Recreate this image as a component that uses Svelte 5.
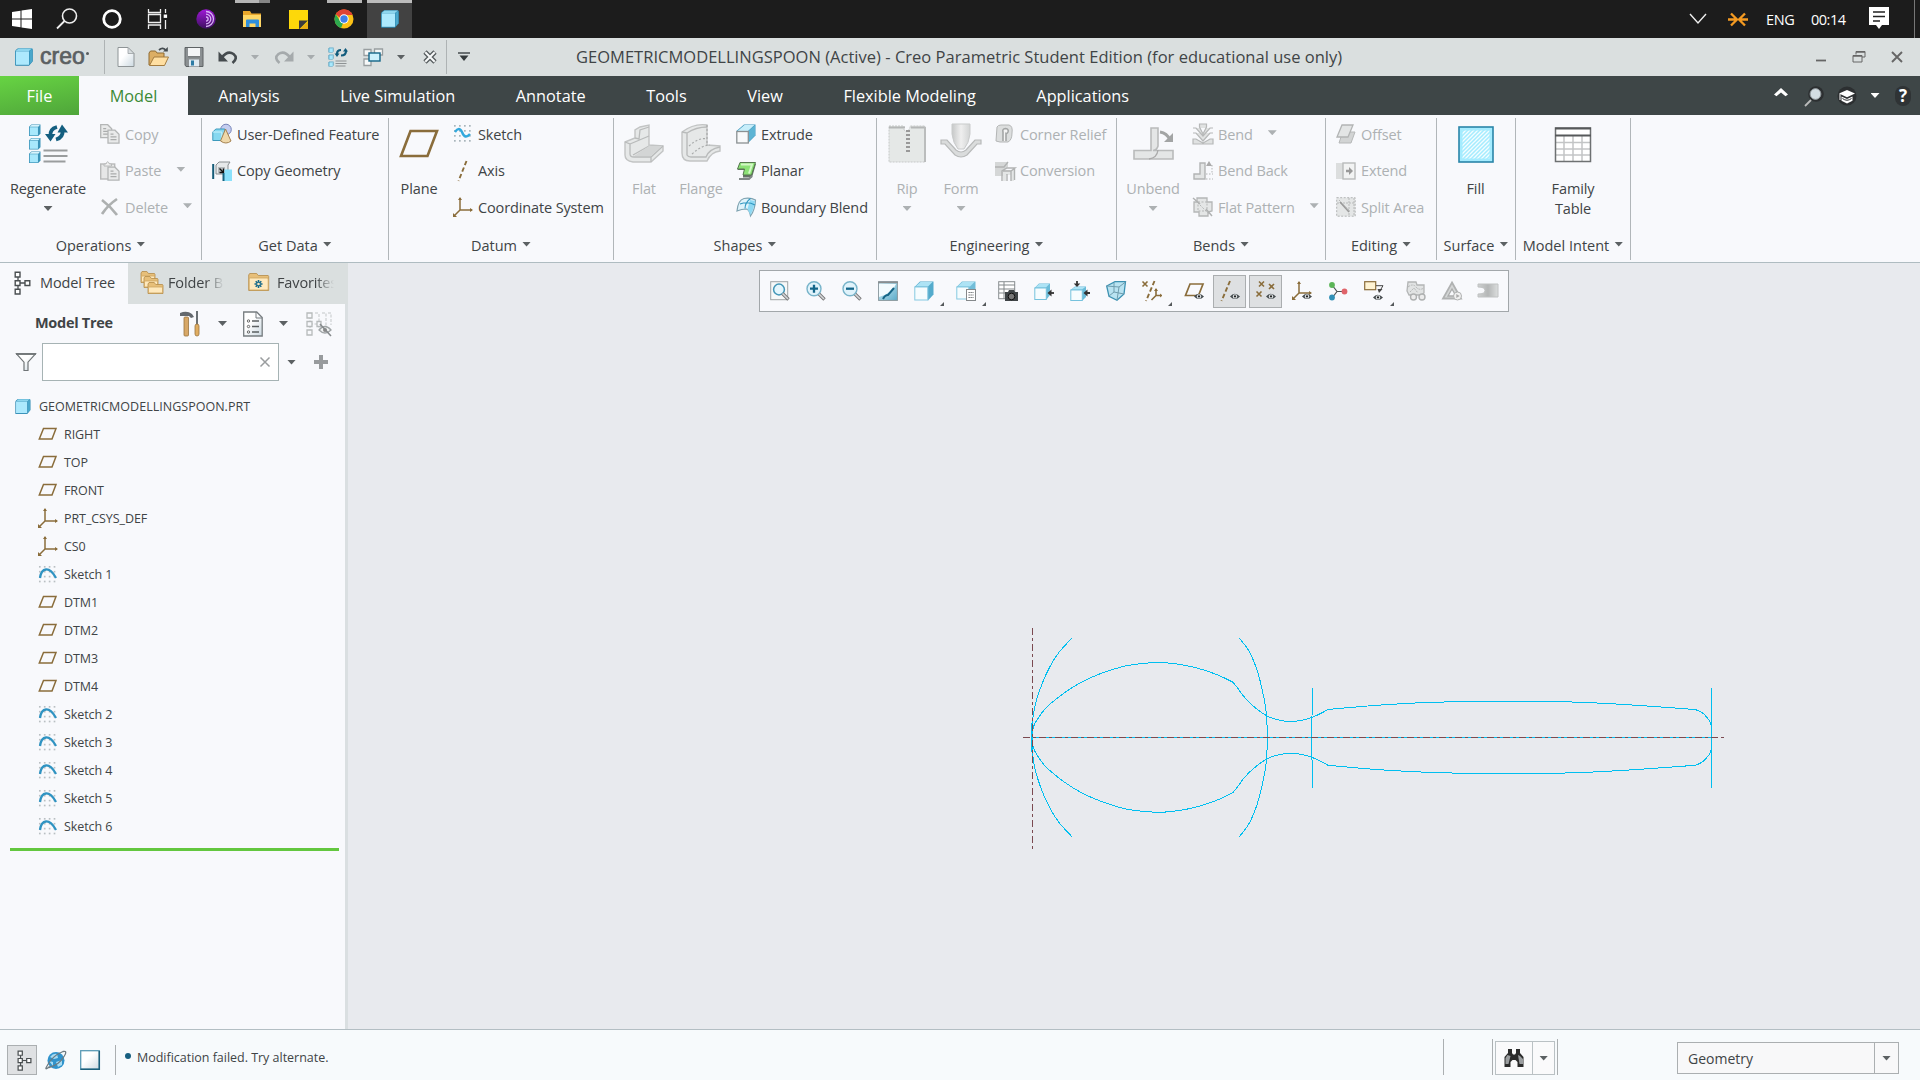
<script>
  const brown = '#8a6d3b';
  const eye = '<path d="M10 15.5q4.5-5.5 10 0q-5 5-10 0z" fill="#454b4e"/><circle cx="15" cy="15.4" r="2.2" fill="#dfe3e5"/><circle cx="15" cy="15.4" r="1.1" fill="#222"/>';
  const lens = '<path d="M12.5 12.5l6 6" stroke="#777" stroke-width="3.4"/><path d="M12.5 12.5l5.5 5.5" stroke="#d5d8da" stroke-width="1.6"/>';
  const box = (x, y, s, c = '#a8e8fc') =>
    `<path d="M${x} ${y + s * 0.2}l${s * 0.2}-${s * 0.2}h${s * 0.8}v${s * 0.8}l-${s * 0.2} ${s * 0.2}h-${s * 0.8}z" fill="#3a93b8"/><path d="M${x + 0.6} ${y + s * 0.2}l${s * 0.17}-${s * 0.15}h${s * 0.72}l-${s * 0.14} ${s * 0.15}z" fill="#d6f4fd"/><path d="M${x + 0.8} ${y + s * 0.24}h${s * 0.71}v${s * 0.7}h-${s * 0.71}z" fill="${c}"/>`;
  const dots = (c) => {
    let s = '';
    for (const y of [1, 6, 11, 16]) for (const x of [1, 6, 11, 16]) s += `<rect x="${x}" y="${y}" width="1.7" height="1.7" fill="${c}"/>`;
    return s;
  };
  const xmark = (x, y) => `<path d="M${x} ${y}l5 5m0-5l-5 5" stroke="${brown}" stroke-width="1.6" fill="none"/>`;
  const sheet = (x, y) => `<path d="M${x} ${y}h7l4 4v9h-11z" fill="#e9eaea" stroke="#b4b6b6" stroke-width="1.3"/><path d="M${x + 2.5} ${y + 4}h3m-3 2.7h6m-6 2.7h6" stroke="#aaacac" stroke-width="1.2"/>`;
  const folder = (x, y, w, h) => `<path d="M${x} ${y}l1-1.5h${w * 0.35}l1.5 2h${w * 0.65 - 3}l.5 1v${h - 2}h-${w}z" fill="#e7bf79" stroke="#b48c49" stroke-width=".8"/><rect x="${x + 0.5}" y="${y + 3}" width="${w - 1}" height="${h - 4}" rx="1" fill="#ffe9bd" stroke="#cda55f" stroke-width=".8"/>`;

  // Every drawing lives in its own square or rectangular view box, [width, height, markup].
  const icons = {
    win: [20, 20, '<path d="M0 3l8.5-1.3v7.8H0zM9.5 1.5L20 0v9.5H9.5zM0 10.5h8.5v7.8L0 17zM9.5 10.5H20V20L9.5 18.5z" fill="#fff"/>'],
    search: [22, 22, '<circle cx="13.5" cy="8" r="7" fill="none" stroke="#eee" stroke-width="1.6"/><path d="M8.5 13L1 20.5" stroke="#eee" stroke-width="1.8"/>'],
    ring: [20, 20, '<circle cx="10" cy="10" r="8.3" fill="none" stroke="#fff" stroke-width="2.8"/>'],
    taskview: [22, 20, '<path d="M1.5 0v3.5h12V0M1.5 20v-4h12v4M1.5 5.5h12v8h-12zM18.5 0v4M18.5 11v9" fill="none" stroke="#eee" stroke-width="1.3"/><rect x="16.7" y="5.5" width="3.4" height="3.4" fill="#fff"/>'],
    tor: [20, 20, '<circle cx="10" cy="10" r="9.7" fill="url(#torFill)"/><path d="M10 2.5a7.500 7.500 0 010 15M10 5.2a4.800 4.800 0 010 9.600M10 8a2 2 0 010 4.200" stroke="#d6b3f4" stroke-width="1.3" fill="none"/>'],
    explorer: [19, 17, '<path d="M0 0h7l1.500 2.500H18V16H0z" fill="#e9a72c"/><path d="M0 4h18v12H0z" fill="#ffd766"/><path d="M3 16V9.500q0-1 1-1h11q1 0 1 1V16h-3.500v-3.500h-6V16z" fill="#2f8fdc"/>'],
    note: [19, 19, '<path d="M0 0h19v13l-5.500 6H0z" fill="#fdd80a"/><path d="M10 10.500h9l-8.500 8.500H10z" fill="#3c3a3c"/><path d="M19 12v7h-8.500z" fill="#e9ad12"/>'],
    chrome: [20, 20, '<circle cx="10" cy="10" r="9.5" fill="#fbc116"/><path d="M10 10L1.800 5.200A9.500 9.500 0 0118.600 6H10z" fill="#e33b2e"/><path d="M1.800 5.200l4.600 7.200 3 .7-2.300 6A9.500 9.500 0 011.800 5.200z" fill="#2da94f"/><path d="M10 .5a9.500 9.500 0 018.500 5.300H10L6 9 1.900 5.100A9.500 9.500 0 0110 .5z" fill="#df4434"/><circle cx="10" cy="10" r="4.7" fill="#fff"/><circle cx="10" cy="10" r="3.7" fill="#3f7fe8"/>'],
    cube: [20, 20, '<path d="M1 4.500Q1 3 4 1.200h13.500q1.500 0 1.300 2v11L15 18.800H2q-1 0-1-1z" fill="#2b87b0"/><path d="M1.600 4L4.500 1.600h13.500L15 4z" fill="#8ed6ee"/><path d="M1.800 4.300H15v13.500H1.800z" fill="#ade9fd"/><path d="M15.500 4l2.800-2.200v12.500l-2.800 3.200z" fill="#4aa7cb"/>'],
    chevron: [16, 10, '<path d="M0 0l8 9 8-9" fill="none" stroke="#eee" stroke-width="1.4"/>'],
    orange: [20, 14, '<path d="M0 7.500h7.500M12.500 7.500H20M3 1.500l6 6-6 6M17 1.500l-6 6 6 6" fill="none" stroke="#f49a22" stroke-width="2.3"/>'],
    notif: [20, 24, '<path d="M0 0h20v18h-7l-3 4-3-4H0z" fill="#fff"/><path d="M4 5h12M4 9.500h12M4 14h7" stroke="#222" stroke-width="1.4"/>'],
    newdoc: [18, 20, '<path d="M1 .5h10l6 6v13H1z" fill="url(#paper)" stroke="#8e9496"/><path d="M11 .5v6h6z" fill="#d8dddf" stroke="#9aa0a2" stroke-width=".8"/>'],
    open: [22, 20, '<path d="M1 18V6l1.500-2h5l1.500 2h7v4z" fill="#dcae64" stroke="#8f6b32"/><path d="M1.500 18.500L6 10h14.500l-4 8.500z" fill="#ffdfa2" stroke="#a47c3f"/><path d="M11 3q4-3.500 7 .5" fill="none" stroke="#444b4f" stroke-width="1.8"/><path d="M15 4.500h4.800V0z" fill="#444b4f"/>'],
    save: [20, 20, '<path d="M1 .5h18v19H2L1 18z" fill="#8b9092" stroke="#5e6365"/><rect x="4" y="1" width="12" height="9" fill="#f3f5f6"/><path d="M4 9.700h12" stroke="#5c6062"/><rect x="5" y="12.5" width="10" height="7" fill="#dfeaf1"/><rect x="7" y="13.5" width="3" height="5" fill="#2d7ca5"/>'],
    undo: [20, 16, '<path d="M3.500 9q6-8 12-4 5 4-1 9" fill="none" stroke="#454b4e" stroke-width="2.6"/><path d="M.5 2.500v10h9.500z" fill="#454b4e"/>'],
    redo: [20, 16, '<path d="M16.500 9q-6-8-12-4-5 4 1 9" fill="none" stroke="#a5aaac" stroke-width="2.6"/><path d="M19.500 2.500v10H10z" fill="#a5aaac"/>'],
    regenS: [20, 20, box(0.5, 0.5, 5) + box(0.5, 7.5, 5) + box(0.5, 14.5, 5) + '<path d="M7.500 14h11M7.500 16.500h11M7.500 19h10" stroke="#8d9294" stroke-width="1.2"/><path d="M9 7q0-4 4-4M18 4q0 4.500-5 4.500" fill="none" stroke="#125c7d" stroke-width="2.2"/><path d="M6.500 6.500h5L9 10zM15 4.500h5L17.500 1z" fill="#125c7d"/>'],
    windows: [20, 20, '<path d="M1 2.500h7v6H1zM11.500 2h8v6h-8zM1 12h7v6.500H1z" fill="#f6f8f8" stroke="#989ea0" stroke-width="1.3"/><rect x="6" y="6" width="11" height="8" fill="#cdf1fd" stroke="#146688" stroke-width="1.4"/>'],
    closeX: [14, 14, '<path d="M2 2l10 10M12 2L2 12" stroke="#555b5d" stroke-width="4.6"/><path d="M2.300 2.300l9.400 9.400M11.700 2.300l-9.400 9.400" stroke="#f7f9f9" stroke-width="2.1"/>'],
    more: [12, 10, '<path d="M0 1h12" stroke="#444b4e" stroke-width="1.5"/><path d="M1.500 3.500h9L6 9z" fill="#343a3c"/>'],
    min: [12, 12, '<path d="M1 9.500h10" stroke="#666" stroke-width="1.8"/>'],
    restore: [14, 14, '<path d="M4 4.500V1.500h9V7h-3M1 5.500h9v6.500H1z" fill="none" stroke="#666"/><path d="M4 2h9M1 6h9" stroke="#666" stroke-width="1.7"/>'],
    close: [12, 12, '<path d="M1 1l10 10M11 1L1 11" stroke="#666" stroke-width="1.9"/>'],
    caretUp: [14, 9, '<path d="M7 0l7 6.500-2.500 1.800L7 4.500 2.500 8.300 0 6.500z" fill="#fff"/>'],
    glass: [20, 22, '<circle cx="12" cy="9" r="7.8" fill="#2c2f31"/><path d="M7 15l-6 6" stroke="#bbb" stroke-width="1.8"/><circle cx="11.5" cy="9" r="5.4" fill="#d3dde3" stroke="#8f979b"/>'],
    grad: [20, 20, '<circle cx="10" cy="10" r="9.5" fill="#2c2f31"/><path d="M2 7.500L10 4l8 3.500-8 3.800z" fill="#fff"/><path d="M4.500 10.500l5.500 2.600 5.500-2.600v4.200L10 17.500l-5.500-2.800z" fill="#fff"/><path d="M5.500 12.500q4.500 3.500 9 0" fill="none" stroke="#2c2f31"/><path d="M3 8v6" stroke="#fff"/>'],
    regen: [40, 40, box(1, 0.5, 11.5) + box(1, 14, 11.5) + box(1, 27.500, 11.500) + '<path d="M15.500 26.500h24M15.500 32h24M15.500 37.500h22" stroke="#9a9d9e" stroke-width="2"/><path d="M22.500 12q-1-7 6.500-9M34.500 5.500q1 8-6.500 10" fill="none" stroke="#145f80" stroke-width="3.8"/><path d="M17 10h10.500L22.500 17.500zM29.500 8.500H40L34 .5z" fill="#145f80"/>'],
    copy: [20, 20, sheet(0.7, 0.7) + sheet(8, 6.2)],
    paste: [20, 20, '<rect x=".7" y="3" width="14" height="15" fill="#e6e7e7" stroke="#b8baba" stroke-width="1.4"/><path d="M4 5V3h2Q7.500-1.500 9.500 3h2v2z" fill="#f1f1f1" stroke="#b8baba"/>' + sheet(8, 6.2)],
    del: [20, 20, '<path d="M2 3q8 6 15 15M17 2Q8 8 2 17" fill="none" stroke="#adb0b0" stroke-width="2.7"/>'],
    udf: [20, 20, '<circle cx="14" cy="5.5" r="5.3" fill="#c4cdf0" stroke="#7784b9"/><path d="M.8 8l3-3h9v8l-3 3.500h-9z" fill="#86d8f0" stroke="#3d9abc"/><path d="M.8 8h9v8.500" fill="none" stroke="#c9f1fb"/><path d="M8.500 17L13.500 5 19 17q-5 4-10.500 0z" fill="#efd8aa" stroke="#a58250"/>'],
    copygeo: [20, 20, '<rect x=".2" y="3" width="2" height="15" fill="#165c78"/><path d="M4 4l3-3h11l-2 3v9H4z" fill="#e6e9ea" stroke="#888e90"/><path d="M6 6h7v7H6z" fill="#b5babc"/><path d="M7.500 7.500l4 4m0-4v4h-4" stroke="#111" stroke-width="1.300" fill="none"/><path d="M10.500 12H13v8h-2.500z" fill="#17627f"/><path d="M12.500 8.500H20V20h-7.500z" fill="#8be1fb"/>'],
    plane: [40, 40, `<path d="M11.500 7H38L28.500 32H2z" fill="none" stroke="${brown}" stroke-width="2.6"/>`],
    sketch: [20, 20, dots('#a9b5bb') + '<path d="M2 8q4-6 7 0 3 8 8 2" fill="none" stroke="#33a9dd" stroke-width="2.4"/>'],
    axis: [20, 20, `<path d="M13.500 0l-8 20" stroke="${brown}" stroke-width="1.9" stroke-dasharray="4.5 2.5"/>`],
    csys: [20, 20, `<path d="M7 1v12h12M7 13l-6 6" fill="none" stroke="${brown}" stroke-width="1.5"/><path d="M5 3h4L7 0zM17 11v4l3-2zM0 20v-4l4 4z" fill="${brown}"/>`],
    flat: [40, 40, '<path d="M1 18l10-4V6l5-3 9-2v20l14 1v5L27 38H9q-8-1-8-7z" fill="#e6e8e8" stroke="#c2c4c4" stroke-width="1.4"/><path d="M1 18l5 2v10q0 3 4 3h17l12-11M6 20l19-8M9 31l16-9M27 33v5M11 14l4 1 1-9 9-3" fill="none" stroke="#b9bbbb" stroke-width="1.3"/><path d="M10 32l15-10h13L27 32z" fill="#d3d5d5"/>'],
    flange: [40, 40, '<path d="M1 8Q13-1 26 1v20l13 1v5q-9 1-13 10H9q-8 0-8-8z" fill="#e6e8e8" stroke="#c2c4c4" stroke-width="1.4"/><path d="M6 9v22q1 2 4 2h15q3-8 14-10M1 8l5 1q9-6 20-6" fill="none" stroke="#b9bbbb" stroke-width="1.4"/><path d="M8 22q10-9 18-7M11 30q10-9 18-9M26 1v20" fill="none" stroke="#a9abab" stroke-dasharray="2 2" stroke-width="1.2"/>'],
    extrude: [20, 20, '<path d="M.5 7L8 .5h11.500v11L12 19z" fill="#3f97bd"/><path d="M1.500 7l7-6h10L12 7z" fill="#c7eefa"/><path d="M12.500 7L19 1.200v10L12.500 18z" fill="#5db4d4"/><rect x=".8" y="7.5" width="11.5" height="11.5" fill="#f8f9fa" stroke="#8b9193" stroke-width="1.3"/>'],
    planar: [20, 20, '<path d="M3.500 3H20l-4 13.500H7V13h2.500V9h-8z" fill="#67716a"/><path d="M4 1.500h15.500L15.500 14H7l1.500-6H1.500z" fill="#8ce276" stroke="#56794e"/><path d="M5 3.500h11l-3 9" fill="none" stroke="#d3f8c6" stroke-width="2"/><path d="M3 18h10l3-3" fill="none" stroke="#818887" stroke-width="2"/>'],
    blend: [20, 20, '<path d="M1 14Q2 3 8 1.500q7-1 11.500 1.500Q19 13 14.500 19q-1-6-4-7-5 0-9.500 2z" fill="#dff3fb" stroke="#7fa3b1" stroke-width="1.2"/><path d="M14 3l5 1q-1 8-4.500 14l-3-6z" fill="#8fd9f3"/><path d="M4 7q8-3 15 1M9 11.500q0-6 5.500-10" fill="none" stroke="#3097c1" stroke-width="1.100"/>'],
    rip: [40, 40, '<path d="M2 2h15v4l3 2 3-4V2h15v36H2z" fill="#e5e8e7" stroke="#c6c8c8" stroke-dasharray="2 1"/><path d="M2 3.500h16M24 3.500h14" stroke="#b5b7b7" stroke-width="2"/><path d="M38 3v35" stroke="#bbbdbd" stroke-width="2"/><path d="M21 6v22" stroke="#999" stroke-width="4" stroke-dasharray="2 2"/>'],
    form: [40, 40, '<path d="M11 0h18v10q-1 9-6 15h-6q-5-6-6-15z" fill="url(#grey)" stroke="#c9cbcb"/><path d="M0 16h6l9 10q5 4 10 0l9-10h6v4h-4L26 31q-6 4-12 0L4 20H0z" fill="#dadcdc" stroke="#b8baba" stroke-width="1.2"/>'],
    corner: [20, 20, '<path d="M2 3q1-2 4-2h8q4 1 3 8 0 7-4 9H5l-4-1z" fill="#dcdede" stroke="#b4b6b6"/><path d="M8 17V8q-1-3 2.500-3.500Q14 5 13 8q-1 2-2 1.500V17" fill="#f4f4f4" stroke="#a3a5a5" stroke-width="1.6"/>'],
    conv: [20, 20, '<path d="M0 1h13v5l-5 4v5H0z" fill="#d5d7d7"/><path d="M8 9h11v11h-3v-6h-5v6H8z" fill="#e4e6e6"/><path d="M0 6h9l4-5M8 10h8l4-3h-8l-5 3v10M12 13v7M16 10v10M19.500 8v11" fill="none" stroke="#b1b3b3" stroke-width="1.4"/>'],
    unbend: [40, 40, '<path d="M1 26.500h17V4h7v18q-1 4-5 4.500h20V35H1z" fill="#e4e6e6" stroke="#b9bbbb" stroke-width="1.6"/><path d="M16 35q8-1 9-9" fill="none" stroke="#aaa" stroke-width="1.3"/><path d="M27 8q7 1 10 8" fill="none" stroke="#a3a5a5" stroke-width="3"/><path d="M31 18h9V9z" fill="#a3a5a5"/>'],
    bend: [20, 20, '<path d="M6.500 0h7v3L10 10 6.500 3zM0 4h3l7 8 7-8h3M0 9h3l7 8 7-8h3M0 20h20v-5h-3l-7 4-7-4H0z" fill="#e0e2e2" stroke="#b6b8b8" stroke-width="1.2"/>'],
    bendback: [20, 20, '<path d="M1 13h6V2h5v16H1z" fill="#e3e5e5" stroke="#b2b4b4" stroke-width="1.4"/><path d="M13 13h7M13 18h7M19 4v9" stroke="#b2b4b4" stroke-dasharray="1.5 1.5"/><path d="M13 5l3-5 3 5z" fill="#aaa"/>'],
    flatp: [20, 20, '<path d="M4 1h10v4h5v9l-4 1v4H6v-4H1V5h3z" fill="#e4e6e6" stroke="#b4b6b6" stroke-width="1.3"/><path d="M2 3l14 14M5 5h9v9H5z" stroke="#b5b7b7" fill="none" stroke-dasharray="2 1.5"/><path d="M0 1l7 6M13 12l6 7" stroke="#b0b2b2" stroke-width="1.5"/>'],
    offset: [20, 20, '<path d="M5 13l3-5h11l-4 11H3z" fill="#d2d4d4" stroke="#b6b8b8"/><path d="M6 1h11l-5 12H1z" fill="#e3e5e5" stroke="#b2b4b4" stroke-width="1.3"/>'],
    extend: [20, 20, '<path d="M0 2h8v16H0z" fill="#dcdede"/><rect x="7" y="2" width="12" height="16" fill="#f2f3f3" stroke="#b9bbbb" stroke-width="1.4"/><path d="M10 8.800h3V6l4 4-4 4v-2.800h-3z" fill="#999"/>'],
    split: [20, 20, '<rect x=".7" y=".7" width="18.5" height="18.5" fill="#e4e6e6" stroke="#b3b5b5" stroke-dasharray="2 1.5"/><path d="M1 6h18M13 1v18M18 1v18M3 3l11 11" stroke="#b8baba" stroke-dasharray="2 1" fill="none"/><path d="M4 5l9 10" stroke="#999" stroke-width="1.5"/>'],
    fill: [40, 44, '<rect x="3" y="3" width="34" height="35" fill="#a5ecff" stroke="#2a85a8" stroke-width="1.6"/><rect x="6.5" y="6.5" width="27" height="28" fill="url(#hatch)"/>'],
    table: [40, 44, '<rect x="2.5" y="4" width="35" height="33.5" fill="#fff"/><path d="M11 12v25M20 12v25M29 12v25M3 18.500h35M3 25h35M3 31h35" stroke="#c3c5c6" stroke-width="1.5"/><path d="M2.500 4h35v33.500h-35z" fill="none" stroke="#6e7172" stroke-width="1.5"/><path d="M2 4.500h36M2 11.500h36" stroke="#56595a" stroke-width="2"/>'],
    refit: [20, 20, '<rect x=".7" y=".7" width="17" height="18" fill="#f7f8f8" stroke="#9fa4a6"/><circle cx="9" cy="8.5" r="5.4" fill="#e4f6fd" stroke="#4396b7" stroke-width="1.5"/>' + lens],
    zin: [20, 20, lens + '<circle cx="8" cy="7.7" r="7" fill="#e0f3fb" stroke="#78b4ca" stroke-width="1.4"/><path d="M4 7.700h8M8 3.700v8" stroke="#13668a" stroke-width="2.3"/>'],
    zout: [20, 20, lens + '<circle cx="8" cy="7.7" r="7" fill="#e0f3fb" stroke="#78b4ca" stroke-width="1.4"/><path d="M4 7.700h8" stroke="#13668a" stroke-width="2.3"/>'],
    repaint: [20, 20, '<rect x=".6" y=".6" width="18.8" height="18.8" fill="url(#sky)" stroke="#8b989d"/><path d="M1 3h17Q15 12 1 16z" fill="#f2fbfe"/><path d="M0 1.500h20" stroke="#898e90" stroke-width="1.5"/><path d="M5 18q2-4 5-4L16 7" stroke="#156586" stroke-width="2" fill="none"/>'],
    shade: [20, 20, '<path d="M.5 6L6 .5h13.500v13L14 19.500z" fill="#54abcc"/><path d="M1.500 5.500L6.500 1h12L14 5.500z" fill="#ade3f5"/><rect x=".8" y="6" width="13" height="13" fill="#f6fcfe" stroke="#86c9e1"/>'],
    saved: [20, 20, '<path d="M.5 6L6 .5h13.500v11L14 17.500z" fill="#71bdd8"/><path d="M1.500 5.500L6.500 1h12L14 5.500z" fill="#ade3f5"/><rect x=".8" y="6" width="12" height="12" fill="#f6fcfe" stroke="#86c9e1"/><rect x="10.5" y="8.5" width="9" height="11" fill="#fff" stroke="#85898b"/><path d="M12.500 11.500h5m-5 2.500h5m-5 2.500h5" stroke="#656a6c" stroke-width="1.2" stroke-dasharray="1.3 .7"/>'],
    camera: [20, 20, '<rect x=".7" y=".7" width="16" height="17" fill="#fff" stroke="#888d8f"/><path d="M1 4h16M1 8h16M1 12h16M6 1v17" stroke="#83888a"/><path d="M7 11h3l1-2h5l1 2h3v9H7z" fill="#3f4446"/><circle cx="13.5" cy="15.5" r="3.3" fill="#777" stroke="#111"/>'],
    view1: [20, 20, '<path d="M.5 7L5 2.500h11V14l-3.500 4.500z" fill="#6bbcd9"/><path d="M1.500 6.500L5.200 3h10L12 6.500z" fill="#ade3f5"/><rect x=".8" y="7" width="11.5" height="11.5" fill="#f6fcfe" stroke="#76c2dd"/><path d="M15 12h5" stroke="#333" stroke-width="1.8"/><path d="M13.500 12l4-3.500v7z" fill="#333"/>'],
    view2: [20, 20, '<path d="M.5 9L5 5.500h11V16l-3.500 3.500z" fill="#6bbcd9"/><path d="M1.500 8.500L5.200 6h10L12 8.500z" fill="#ade3f5"/><rect x=".8" y="9" width="11.5" height="10.5" fill="#f6fcfe" stroke="#76c2dd"/><path d="M15 12h5M7 0v3" stroke="#333" stroke-width="1.8"/><path d="M13.500 12l4-3.500v7zM7 6L3.700 2.500h6.600z" fill="#333"/>'],
    persp: [20, 20, '<path d="M.7 5L9 .7h10.500L18 13l-7 6.300-8-4z" fill="#b9e3f1" stroke="#3d92b2" stroke-width="1.3"/><path d="M.7 5L13 6l6.500-5M13 6l-2 13M8 2v9l-5 4m5-4l10 2" fill="none" stroke="#6f9dae"/>'],
    datums: [20, 20, xmark(0.5, 0.5) + `<path d="M12.500 0L4 20" stroke="${brown}" stroke-width="1.9" stroke-dasharray="4.5 2.5"/><path d="M14 8v6.500h6M14 14.500L9.500 19" fill="none" stroke="${brown}" stroke-width="1.6"/><path d="M12 10h4l-2-3zM18 12.500v4l2-2z" fill="${brown}"/>`],
    pPlane: [20, 20, `<path d="M6 3h13l-4.500 11.500H1.500z" fill="none" stroke="${brown}" stroke-width="1.7"/>` + eye],
    pAxis: [20, 20, `<path d="M10 0L1.500 20" stroke="${brown}" stroke-width="1.9" stroke-dasharray="4.5 2.5"/>` + eye],
    pPoint: [20, 20, xmark(3, 0.5) + xmark(13, 3) + xmark(0.5, 10.5) + eye],
    pCsys: [20, 20, `<path d="M7 1v11h12M7 12l-6 6" fill="none" stroke="${brown}" stroke-width="1.5"/><path d="M5 3h4L7 0zM17 10v4l3-2zM0 19v-4l4 4z" fill="${brown}"/>` + eye],
    spin: [20, 20, '<path d="M4 4l5 6.500L4 17M9 10.500h8" fill="none" stroke="#4c5254" stroke-width="1.2"/><circle cx="4" cy="4" r="2.9" fill="#5cb558"/><circle cx="4" cy="16.5" r="2.9" fill="#3190b7"/><circle cx="16.5" cy="10.5" r="2.9" fill="#e0646a"/>'],
    annot: [20, 20, `<rect x=".7" y=".7" width="11" height="8" fill="#fff4d4" stroke="${brown}" stroke-width="1.2"/><path d="M12 4.700h7l-3 5" fill="none" stroke="#444"/><path d="M13.500 8h5L15 12z" fill="#444"/>` + '<g transform="translate(-1 1)">' + eye + '</g>'],
    sim1: [20, 20, '<path d="M2 1h8l1 3h7v8l-3 2H3L1 10z" fill="#e1e3e3" stroke="#b3b5b5" stroke-width="1.3"/><path d="M2 6q5-4 8 0t8 1M4 11l4-4 4 5" fill="none" stroke="#b5b7b7" stroke-dasharray="2 1"/><circle cx="7.5" cy="16" r="3" fill="#ececec" stroke="#afb1b1" stroke-width="1.4"/><circle cx="16" cy="16" r="3" fill="#ececec" stroke="#afb1b1" stroke-width="1.4"/>'],
    sim2: [20, 20, '<path d="M10 1.500L19 17.500H1z" fill="#d4d6d6" stroke="#b0b2b2" stroke-width="1.8"/><path d="M10 8l4 7H6z" fill="#f8f9fc" stroke="#aaacac" stroke-width="1.3"/><circle cx="15.5" cy="15" r="4" fill="#f0f0f0" stroke="#b0b2b2"/><path d="M14.300 13v4l3.400-2z" fill="#aaa"/>'],
    sim3: [20, 20, '<path d="M0 3h20v13H0V13q7 0 7-3.500T0 6z" fill="url(#grey2)" stroke="#c0c2c2"/>'],
    tree: [18, 24, '<path d="M4 5v14M4 12h7" stroke="#4a4f51" stroke-width="1.3"/><path d="M1.200 1.200h4.800v4.800H1.200zM1.200 9.700h4.800v4.800H1.200zM1.200 18.200h4.800V23H1.200zM11 9.700h4.800v4.800H11z" fill="#fff" stroke="#4a4f51" stroke-width="1.4"/>'],
    folders: [24, 24, folder(1, 2, 14, 10) + folder(4, 7, 14, 10) + folder(8, 13, 15, 10)],
    fav: [22, 20, folder(0.7, 2, 20, 16) + '<path d="M10.500 7v8M6.500 11h8M7.700 8.200l5.600 5.600M13.300 8.200l-5.600 5.600" stroke="#156889" stroke-width="1.6"/><circle cx="10.5" cy="11" r="1.3" fill="#ffe9bd"/>'],
    tools: [22, 26, '<path d="M1 2q7-3 12 1l2 3-3 1-2-2H1z" fill="#64696e"/><rect x="5" y="6" width="4.5" height="19" rx="1" fill="#d8a867" stroke="#9b7540" stroke-width=".8"/><path d="M18 0v14" stroke="#6a7074" stroke-width="2"/><rect x="16" y="13" width="4" height="12" rx="2" fill="#e0ad61" stroke="#9b7540" stroke-width=".8"/>'],
    list: [20, 26, '<path d="M.7 1h13l5.500 5.500V25H.7z" fill="url(#paper)" stroke="#777d80" stroke-width="1.3"/><path d="M13 1v6h6" fill="none" stroke="#777d80"/><path d="M9 10h7M9 15.500h7M9 21h7" stroke="#5b6062" stroke-width="1.4"/><circle cx="5.5" cy="10" r="1.2" fill="none" stroke="#666"/><circle cx="5.5" cy="15.5" r="1.2" fill="none" stroke="#666"/><circle cx="5.5" cy="21" r="1.2" fill="none" stroke="#666"/>'],
    hide: [26, 26, '<path d="M4 5v16M4 13h9M9 2h4M16 2h4v14M22 2h3v12M13 3v14" stroke="#c3c7c8" fill="none" stroke-dasharray="3 1.5"/><path d="M1 2h5v5H1zM1 10.500h5v5H1zM1 19h5v5H1zM11 10.500h4v5h-4z" fill="#f8f9fc" stroke="#b6babb" stroke-width="1.3"/><path d="M13 19q6-7 12 0-6 6-12 0z" fill="#f0f2f2" stroke="#9fa4a6" stroke-width="1.3"/><circle cx="19" cy="19" r="2" fill="#888"/><path d="M14 13l11 12" stroke="#85898b" stroke-width="1.5"/>'],
    funnel: [20, 18, '<path d="M.5.8h19l-7.500 8.400v8.300H8V9.200z" fill="url(#paper)" stroke="#707577" stroke-width="1.2"/><path d="M0 1h20" stroke="#707577" stroke-width="1.8"/>'],
    clear: [10, 10, '<path d="M.5.5l9 9M9.500.5l-9 9" stroke="#9a9d9f" stroke-width="1.5"/>'],
    plus: [14, 14, '<path d="M0 7h14M7 0v14" stroke="#989b9d" stroke-width="4"/>'],
    tPlane: [20, 16, `<path d="M5.500 2.500H18L14 13H1.300z" fill="none" stroke="${brown}" stroke-width="1.5"/>`],
    tSketch: [20, 18, '<g transform="scale(.98)">' + dots('#b9bfc2') + '</g><path d="M2 13q1-8 6-8.500Q13 4 18 13" fill="none" stroke="#2f93c2" stroke-width="2.3"/>'],
    globe: [20, 20, '<circle cx="10" cy="10.5" r="8.5" fill="#2f93cc"/><path d="M4 7q3-4 7-3l1 4-4 1zM10 12l6-2v5l-4 2zM3 11l4 1v4z" fill="#a4dbf4"/><path d="M3 17Q-2 21 1 16 6 6 17 1.500q5-1 1 5Q13 15 3 17.500z" fill="none" stroke="#6d7a80" stroke-width="1.3"/>'],
    screen: [20, 20, '<rect x=".7" y=".7" width="18.6" height="18.6" fill="url(#paper)" stroke="#5a9ab5" stroke-width="1.3"/><path d="M.5 19.300h18.800V1" fill="none" stroke="#1c5f7b" stroke-width="1.5"/>'],
    binoc: [20, 20, '<path d="M4 1h4v4l1 1.500h2L12 5V1h4v4l3.500 4v10h-6v-5l-2-2h-3l-2 2v5H.5V9L4 5z" fill="#2a2a2a"/><path d="M3.500 7L1.500 10v6h3l2-8zM14 7l2 1 3 3v5h-3.500z" fill="#9a9d9f"/>'],
  };

  const tabs = ['Analysis', 'Live Simulation', 'Annotate', 'Tools', 'View', 'Flexible Modeling', 'Applications'];

  const groups = [
    { name: 'Operations', width: 202, gap: 4, big: [{ label: 'Regenerate', icon: 'regen', w: 96, menu: true }],
      small: [{ label: 'Copy', icon: 'copy', off: true }, { label: 'Paste', icon: 'paste', off: true, menu: true }, { label: 'Delete', icon: 'del', off: true, menu: true }] },
    { name: 'Get Data', width: 187, gap: 10, big: [], small: [{ label: 'User-Defined Feature', icon: 'udf' }, { label: 'Copy Geometry', icon: 'copygeo' }] },
    { name: 'Datum', width: 225, gap: 4, big: [{ label: 'Plane', icon: 'plane', w: 60 }],
      small: [{ label: 'Sketch', icon: 'sketch' }, { label: 'Axis', icon: 'axis' }, { label: 'Coordinate System', icon: 'csys' }] },
    { name: 'Shapes', width: 263, gap: 8, big: [{ label: 'Flat', icon: 'flat', w: 60, off: true }, { label: 'Flange', icon: 'flange', w: 54, off: true }],
      small: [{ label: 'Extrude', icon: 'extrude' }, { label: 'Planar', icon: 'planar' }, { label: 'Boundary Blend', icon: 'blend' }] },
    { name: 'Engineering', width: 240, gap: 10, big: [{ label: 'Rip', icon: 'rip', w: 60, off: true, menu: true }, { label: 'Form', icon: 'form', w: 48, off: true, menu: true }],
      small: [{ label: 'Corner Relief', icon: 'corner', off: true }, { label: 'Conversion', icon: 'conv', off: true }] },
    { name: 'Bends', width: 209, gap: 4, big: [{ label: 'Unbend', icon: 'unbend', w: 72, off: true, menu: true }],
      small: [{ label: 'Bend', icon: 'bend', off: true, menu: true }, { label: 'Bend Back', icon: 'bendback', off: true }, { label: 'Flat Pattern', icon: 'flatp', off: true, menu: true }] },
    { name: 'Editing', width: 111, gap: 10, big: [], small: [{ label: 'Offset', icon: 'offset', off: true }, { label: 'Extend', icon: 'extend', off: true }, { label: 'Split Area', icon: 'split', off: true }] },
    { name: 'Surface', width: 79, gap: 0, big: [{ label: 'Fill', icon: 'fill', w: 77 }], small: [] },
    { name: 'Model Intent', width: 115, gap: 0, big: [{ label: 'Family Table', icon: 'table', w: 114 }], small: [] },
  ];

  const viewTools = [
    ['refit'], ['zin'], ['zout'], ['repaint'], ['shade', 'menu'], ['saved', 'menu'], ['camera'], ['view1'], ['view2'], ['persp'],
    ['datums', 'menu'], ['pPlane'], ['pAxis', 'on'], ['pPoint', 'on'], ['pCsys'], ['spin'], ['annot', 'menu'], ['sim1'], ['sim2'], ['sim3'],
  ];

  const tree = [
    ['tPlane', 'RIGHT'], ['tPlane', 'TOP'], ['tPlane', 'FRONT'], ['csys', 'PRT_CSYS_DEF'], ['csys', 'CS0'], ['tSketch', 'Sketch 1'],
    ['tPlane', 'DTM1'], ['tPlane', 'DTM2'], ['tPlane', 'DTM3'], ['tPlane', 'DTM4'],
    ['tSketch', 'Sketch 2'], ['tSketch', 'Sketch 3'], ['tSketch', 'Sketch 4'], ['tSketch', 'Sketch 5'], ['tSketch', 'Sketch 6'],
  ];

  // Smooth curve through the given points (Catmull-Rom converted to cubic Béziers).
  function smooth(p) {
    let d = `M${p[0][0]} ${p[0][1]}`;
    for (let i = 0; i < p.length - 1; i++) {
      const a = p[i - 1] ?? p[i], b = p[i], c = p[i + 1], e = p[i + 2] ?? c;
      d += `C${b[0] + (c[0] - a[0]) / 6} ${b[1] + (c[1] - a[1]) / 6} ${c[0] - (e[0] - b[0]) / 6} ${c[1] - (e[1] - b[1]) / 6} ${c[0]} ${c[1]}`;
    }
    return d;
  }
  const axisY = 737.4;
  const mirror = (p) => p.map(([x, y]) => [x, 2 * axisY - y]);
  const profile = [
    [[1032, 737], [1033.4, 727], [1037, 720], [1044.5, 709.5], [1056.7, 698.5], [1073.3, 686.8], [1090, 678], [1110, 670.3], [1130, 665.1], [1156.7, 662.5], [1177, 664], [1197, 668], [1216.7, 674.5], [1233, 682.3]],
    [[1233, 682.3], [1238, 688.5], [1243, 695.5], [1252, 705], [1267, 716], [1280, 720.3], [1291, 721.5], [1302, 720.3], [1311, 717.8], [1320, 713.8], [1328, 709.5]],
    [[1328, 709.5], [1358, 706.8], [1387, 704.6], [1425, 702.6], [1470, 701.5], [1550, 701.5], [1593, 702.8], [1632, 705], [1661, 707], [1695, 709.5]],
    [[1695, 709.5], [1699.5, 711.2], [1703.5, 713.8], [1707, 717.5], [1709.6, 721], [1711.3, 726]],
  ];
  const edges = [
    [[1072, 638], [1059, 652.3], [1050, 666.5], [1043, 681.5], [1037, 698.5], [1033.3, 715], [1031.5, 737.4]],
    [[1239.3, 638], [1249.5, 652], [1257.3, 671], [1262.9, 693], [1266.3, 713], [1267.5, 737.4]],
  ];
  const curves = [...profile, ...edges].flatMap((p) => [smooth(p), smooth(mirror(p))]);
</script>

{#snippet icon(name)}
  <svg class="icon" width={icons[name][0]} height={icons[name][1]} viewBox="0 0 {icons[name][0]} {icons[name][1]}" aria-hidden="true">{@html icons[name][2]}</svg>
{/snippet}

<svg class="defs" width="0" height="0" aria-hidden="true">
  <defs>
    <linearGradient id="torFill" x1="0" y1="0" x2="0" y2="1"><stop offset="0" stop-color="#a017d8" /><stop offset="1" stop-color="#3c1060" /></linearGradient>
    <linearGradient id="paper" x1="0" y1="0" x2="1" y2="1"><stop offset="0.4" stop-color="#fff" /><stop offset="1" stop-color="#ccd9e1" /></linearGradient>
    <linearGradient id="grey" x1="0" y1="0" x2="1" y2="0"><stop offset="0" stop-color="#c6c8c8" /><stop offset="0.5" stop-color="#efefef" /><stop offset="1" stop-color="#d2d4d4" /></linearGradient>
    <linearGradient id="grey2" x1="0" y1="0" x2="1" y2="0"><stop offset="0" stop-color="#cfd1d1" /><stop offset="0.5" stop-color="#b4b6b6" /><stop offset="1" stop-color="#dcdede" /></linearGradient>
    <linearGradient id="sky" x1="0" y1="0" x2="1" y2="1"><stop offset="0" stop-color="#d9f4fc" /><stop offset="1" stop-color="#5aabc9" /></linearGradient>
    <pattern id="hatch" width="4" height="4" patternUnits="userSpaceOnUse"><path d="M-1 5L5-1M-1 1l2-2M3 5l2-2" stroke="#f4fdff" stroke-width="1.3" /></pattern>
  </defs>
</svg>

<div class="desktop">
  <header class="taskbar">
    <div class="task">{@render icon('win')}</div>
    <div class="task">{@render icon('search')}</div>
    <div class="task">{@render icon('ring')}</div>
    <div class="task wide">{@render icon('taskview')}</div>
    <div class="task app">{@render icon('tor')}</div>
    <div class="task app run stack">{@render icon('explorer')}</div>
    <div class="task app">{@render icon('note')}</div>
    <div class="task app run">{@render icon('chrome')}</div>
    <div class="task app current">{@render icon('cube')}</div>
    <div class="tray">
      <span class="t-chev">{@render icon('chevron')}</span>
      <span class="t-orange">{@render icon('orange')}</span>
      <span class="t-lang">ENG</span>
      <span class="t-time">00:14</span>
      <span class="t-note">{@render icon('notif')}</span>
      <i></i>
    </div>
  </header>

  <div class="titlebar">
    <div class="brand">{@render icon('cube')}<b>creo</b><em></em></div>
    <div class="quick">
      <span class="q1">{@render icon('newdoc')}</span>
      <span class="q2">{@render icon('open')}</span>
      <span class="q3">{@render icon('save')}</span>
      <span class="q4">{@render icon('undo')}</span>
      <span class="q5"><i class="arrow pale"></i></span>
      <span class="q6">{@render icon('redo')}</span>
      <span class="q7"><i class="arrow pale"></i></span>
      <span class="q8">{@render icon('regenS')}</span>
      <span class="q9">{@render icon('windows')}</span>
      <span class="q10"><i class="arrow"></i></span>
      <span class="q11">{@render icon('closeX')}</span>
    </div>
    <div class="custom">{@render icon('more')}</div>
    <h1>GEOMETRICMODELLINGSPOON (Active) - Creo Parametric Student Edition (for educational use only)</h1>
    <div class="winbtns">{@render icon('min')}{@render icon('restore')}{@render icon('close')}</div>
  </div>

  <nav class="tabs">
    <span class="file">File</span>
    <span class="model">Model</span>
    {#each tabs as tab}<span class="tab">{tab}</span>{/each}
    <div class="help">
      <span class="h-up">{@render icon('caretUp')}</span>
      <span class="h-find">{@render icon('glass')}</span>
      <span class="h-learn">{@render icon('grad')}</span>
      <span class="h-menu"><i class="arrow white"></i></span>
      <span class="h-help"><b>?</b></span>
    </div>
  </nav>

  <section class="ribbon">
    {#each groups as g}
      <div class="group" style:width="{g.width}px">
        <div class="tools">
          {#each g.big as b}
            <div class="big" class:off={b.off} style:width="{b.w}px">
              <div class="pic">{@render icon(b.icon)}</div>
              <span>{b.label}</span>
              {#if b.menu}<i class="arrow"></i>{/if}
            </div>
          {/each}
          <div class="smalls" style:margin-left="{g.gap}px">
            {#each g.small as s}
              <div class="small" class:off={s.off}>{@render icon(s.icon)}<span>{s.label}</span>{#if s.menu}<i class="arrow"></i>{/if}</div>
            {/each}
          </div>
        </div>
        <div class="gname">{g.name}<i class="arrow"></i></div>
      </div>
    {/each}
  </section>

  <main>
    <aside>
      <div class="ptabs">
        <div class="ptab active">{@render icon('tree')}<span>Model Tree</span></div>
        <div class="ptab folder">{@render icon('folders')}<span>Folder Browser</span></div>
        <div class="ptab fav">{@render icon('fav')}<span>Favorites</span></div>
      </div>
      <div class="panel">
        <div class="phead">
          <strong>Model Tree</strong>
          {@render icon('tools')}<i class="arrow"></i>{@render icon('list')}<i class="arrow last"></i>{@render icon('hide')}
        </div>
        <div class="filter">
          {@render icon('funnel')}
          <div class="field">{@render icon('clear')}</div>
          <i class="arrow"></i>
          {@render icon('plus')}
        </div>
        <div class="node root"><svg class="icon" width="18" height="17" viewBox="0 0 20 20" aria-hidden="true">{@html icons.cube[2]}</svg><span>GEOMETRICMODELLINGSPOON.PRT</span></div>
        {#each tree as [ic, label]}
          <div class="node">{@render icon(ic)}<span>{label}</span></div>
        {/each}
        <div class="insert"></div>
      </div>
    </aside>

    <div class="canvas">
      <svg class="model3d" width="1572" height="766" viewBox="348 263 1572 766" shape-rendering="crispEdges" fill="none" stroke="#00bff0">
        {#each curves as d}<path {d} />{/each}
        <path d="M1031.500 723v29M1311.500 715.500v44M1312.500 688v27M1312.500 760v28M1711.500 688v100M1032 737.500h680" />
        <path d="M1032.500 628v221" stroke="#7b4a50" stroke-dasharray="7 3 3 3" />
        <path d="M1023 737.500h701" stroke="#7b4a50" stroke-dasharray="7 3 3 3" />
      </svg>
      <div class="viewbar">
        {#each viewTools as [name, kind]}
          <div class="vt" class:on={kind === 'on'} class:menu={kind === 'menu'}>{@render icon(name)}</div>
        {/each}
      </div>
    </div>
  </main>

  <footer>
    <div class="fbtn"><svg class="icon" width="15" height="21" viewBox="0 0 17 24" aria-hidden="true">{@html icons.tree[2]}</svg></div>
    <div class="fglobe">{@render icon('globe')}</div>
    <div class="fscreen">{@render icon('screen')}</div>
    <div class="message"><i></i>Modification failed. Try alternate.</div>
    <div class="find"><div class="findbox"><span>{@render icon('binoc')}</span><span class="drop"><i class="arrow"></i></span></div></div>
    <div class="combo"><span>Geometry</span><b><i class="arrow"></i></b></div>
  </footer>
</div>

<style>
  :global(body) { margin: 0; overflow: hidden; }
  .desktop { width: 1920px; height: 1080px; display: flex; flex-direction: column; font-family: "Open Sans", "Noto Sans", sans-serif; font-size: 14.5px; letter-spacing: -0.13px; color: #404446; background: #f8f9fc; white-space: nowrap; }
  .defs { position: absolute; }
  .icon { display: block; flex: none; overflow: visible; }
  .arrow { display: block; flex: none; width: 9px; height: 5px; background: #5c6163; clip-path: polygon(0 0, 100% 0, 50% 100%); }
  .arrow.pale { background: #a7acae; }
  .arrow.white { background: #fff; }

  .taskbar { height: 38px; flex: none; background: #1c1c1c; display: flex; align-items: stretch; }
  .task { width: 45px; display: flex; align-items: center; justify-content: center; box-sizing: border-box; }
  .task:first-child { width: 44px; }
  .task.wide { width: 47px; }
  .task.app { width: 46px; border-top: 3px solid transparent; padding-bottom: 3px; }
  .task.app:nth-child(5) { margin-left: 2px; }
  .task.run { background: linear-gradient(#b5b5b5, #b5b5b5) 6px 0 / 35px 3px no-repeat; background-origin: border-box; background-clip: border-box; }
  .task.stack { background-image: linear-gradient(90deg, #b5b5b5 24px, #858585 24px); }
  .task.current { width: 45px; background: #424242; border-top-color: #bcbcbc; background-clip: padding-box; }
  .tray { margin-left: auto; display: flex; align-items: center; color: #fff; font-size: 14.5px; }
  .t-chev { margin-right: 22px; }
  .t-orange { margin-right: 18px; }
  .t-lang { width: 45px; letter-spacing: -0.4px; }
  .t-time { width: 58px; letter-spacing: -0.5px; }
  .t-note { margin-right: 25px; }
  .tray i { width: 1px; height: 38px; background: #777; margin-right: 5px; }

  .titlebar { height: 38px; flex: none; background: #dadfdf; display: flex; align-items: center; }
  .brand { width: 105px; height: 34px; padding-left: 14px; box-sizing: border-box; display: flex; align-items: center; border-right: 1px solid #aeb3b4; }
  .brand b { font-family: "Liberation Sans", sans-serif; font-size: 23px; line-height: 30px; letter-spacing: 0; color: #5b6062; margin: -3px 0 0 6px; font-weight: 400; -webkit-text-stroke: 0.7px #5b6062; }
  .brand em { width: 3px; height: 3px; border-radius: 2px; background: #565b5d; margin: -8px 0 0 1px; }
  .quick { display: flex; align-items: center; width: 342px; box-sizing: border-box; height: 34px; border-right: 1px solid #aeb3b4; }
  .quick span { flex: none; display: flex; align-items: center; justify-content: center; }
  .q1 { width: 42px; } .q2 { width: 24px; } .q3 { width: 46px; } .q4 { width: 21px; } .q5 { width: 34px; } .q6 { width: 24px; }
  .q7 { width: 30px; } .q8 { width: 24px; } .q9 { width: 46px; } .q10 { width: 10px; } .q11 { width: 14px; margin-left: 17px; }
  .custom { width: 33px; display: flex; justify-content: center; }
  h1 { margin: 0 0 0 96px; font-size: 16.5px; font-weight: 400; letter-spacing: 0.02px; width: 780px; line-height: 38px; }
  .winbtns { margin-left: auto; width: 88px; padding-right: 17px; display: flex; align-items: center; justify-content: space-between; }

  .tabs { height: 39px; flex: none; background: #3e4647; color: #fff; display: flex; align-items: stretch; font-size: 16.3px; letter-spacing: 0; line-height: 40px; }
  .file { width: 79px; text-align: center; background: linear-gradient(170deg, #67d443, #4fa53a); }
  .model { width: 109px; text-align: center; background: #f8f9fc; color: #3c8a36; }
  .tab { padding: 0 30.3px 0 30.300px; }
  .help { margin-left: auto; display: flex; align-items: center; height: 39px; width: 155px; }
  .help span { display: flex; align-items: center; justify-content: center; }
  .h-up { width: 32px; padding-bottom: 6px; }
  .h-find { width: 33px; }
  .h-learn { width: 34px; }
  .h-menu { width: 22px; }
  .h-help { width: 34px; }
  .help b { width: 16px; height: 20px; line-height: 20px; border-radius: 8px; background: #2f3335; text-align: center; font-size: 17px; }

  .ribbon { height: 147px; flex: none; display: flex; background: #f8f9fc; border-bottom: 1px solid #afbcc1; }
  .group { flex: none; height: 142px; margin-top: 3px; box-sizing: border-box; border-right: 1px solid #b1b6b9; display: flex; flex-direction: column; }
  .tools { height: 114px; display: flex; }
  .big { display: flex; flex-direction: column; align-items: center; }
  .pic { height: 44px; margin-top: 6px; display: flex; justify-content: center; }
  .big span { margin-top: 11px; line-height: 20px; text-align: center; width: min-content; white-space: normal; }
  .big .arrow { margin-top: 7px; }
  .off { color: #adb1b3; }
  .off .arrow { background: #adb1b3; }
  .small { height: 36.5px; display: flex; align-items: center; gap: 5px; }
  .small .arrow { margin-left: 10px; margin-top: -3px; }
  .smalls { margin-top: -2px; }
  .gname { height: 26px; display: flex; align-items: center; justify-content: center; gap: 5px; letter-spacing: 0; }
  .gname .arrow { margin-top: -2px; }

  main { flex: 1; min-height: 0; display: flex; }
  aside { width: 348px; flex: none; display: flex; flex-direction: column; }
  .ptabs { height: 41px; display: flex; background: #dadfdf; }
  .ptab { display: flex; align-items: center; overflow: hidden; box-sizing: border-box; padding-bottom: 2px; }
  .ptab.active { width: 128px; background: #f8f9fc; padding-left: 14px; gap: 8px; }
  .ptab.folder { width: 96px; padding-left: 12px; gap: 4px; }
  .ptab.fav { width: 110px; padding-left: 24px; gap: 7px; }
  .folder span, .fav span { overflow: hidden; -webkit-mask-image: linear-gradient(90deg, #000 calc(100% - 18px), transparent); mask-image: linear-gradient(90deg, #000 calc(100% - 18px), transparent); }
  .panel { flex: 1; border-right: 3px solid #dadfe1; background: #f8f9fc; }
  .phead { height: 39px; display: flex; align-items: center; padding-left: 35px; }
  .phead strong { width: 144px; letter-spacing: -0.3px; margin-top: -2px; }
  .phead .arrow { margin: 0 16px 0 17px; }
  .phead .arrow.last { margin: 0 18px 0 16px; }
  .filter { height: 38px; display: flex; align-items: center; padding-left: 16px; }
  .field { width: 237px; height: 38px; box-sizing: border-box; margin: 0 8px 0 6px; border: 1px solid #a6b3b4; background: #fff; display: flex; align-items: center; justify-content: flex-end; padding-right: 8px; }
  .filter > .arrow { margin-right: 18px; }
  .node { height: 28px; display: flex; align-items: center; padding-left: 38px; gap: 6px; font-size: 12.5px; letter-spacing: -0.08px; }
  .root { margin-top: 11px; padding-left: 14px; gap: 7px; letter-spacing: 0.02px; }
  .insert { height: 3px; margin: 8px 6px 0 10px; background: #63c73f; }

  .canvas { position: relative; flex: 1; background: #e8eaee; }
  .model3d { display: block; position: absolute; inset: 0; }
  .viewbar { position: absolute; left: 411px; top: 7px; width: 750px; height: 42px; box-sizing: border-box; border: 1px solid #a2a7aa; background: #f8f9fc; padding: 4px 3px; display: flex; gap: 3px; }
  .vt { position: relative; width: 33px; height: 33px; box-sizing: border-box; display: flex; align-items: center; justify-content: center; border: 1px solid transparent; padding-bottom: 1px; flex: none; }
  .vt.on { background: #dee0e2; border-color: #abaeb0; }
  .vt.menu { margin-right: 6px; }
  .vt.menu::after { content: ""; position: absolute; right: -5px; bottom: 1px; width: 4px; height: 4px; background: #55595b; clip-path: polygon(100% 0, 100% 100%, 0 100%); }

  footer { height: 50px; flex: none; border-top: 1px solid #b3bec3; background: #f7fafc; display: flex; align-items: flex-start; }
  .fbtn { width: 30px; height: 30px; box-sizing: border-box; margin: 15px 0 0 7px; border: 1px solid #abafb1; background: #dfe1e3; display: flex; align-items: center; justify-content: center; padding-left: 5px; }
  .fglobe { margin: 20px 0 0 9px; }
  .fscreen { margin: 20px 15px 0 14px; }
  .message { margin-top: 15px; height: 30px; line-height: 26px; border-left: 1px solid #abafb1; padding-left: 9px; display: flex; font-size: 12.5px; letter-spacing: -0.02px; }
  .message i { width: 6px; height: 6px; border-radius: 50%; background: #175f80; margin: 8px 6px 0 0; }
  .find { margin: 9px 0 0 auto; width: 115px; height: 36px; box-sizing: border-box; border: solid #abafb1; border-width: 0 1px; display: flex; justify-content: flex-end; padding-right: 2px; background: linear-gradient(#abafb1, #abafb1) 48px 0 / 1px 36px no-repeat; }
  .findbox { display: flex; width: 60px; height: 34px; margin-top: 2px; box-sizing: border-box; border: 1px solid #bac1c4; background: #fafafb; }
  .findbox span { width: 37px; display: flex; align-items: center; justify-content: center; box-sizing: border-box; }
  .findbox .drop { width: 22px; border-left: 1px solid #bac1c4; }
  .combo { margin: 12px 21px 0 119px; width: 222px; height: 32px; box-sizing: border-box; border: 1px solid #abafb1; background: #f8f8f9; display: flex; line-height: 31px; font-size: 14px; letter-spacing: 0; }
  .combo span { flex: 1; padding-left: 10px; }
  .combo b { width: 23px; border-left: 1px solid #abafb1; display: flex; align-items: center; justify-content: center; }
</style>
